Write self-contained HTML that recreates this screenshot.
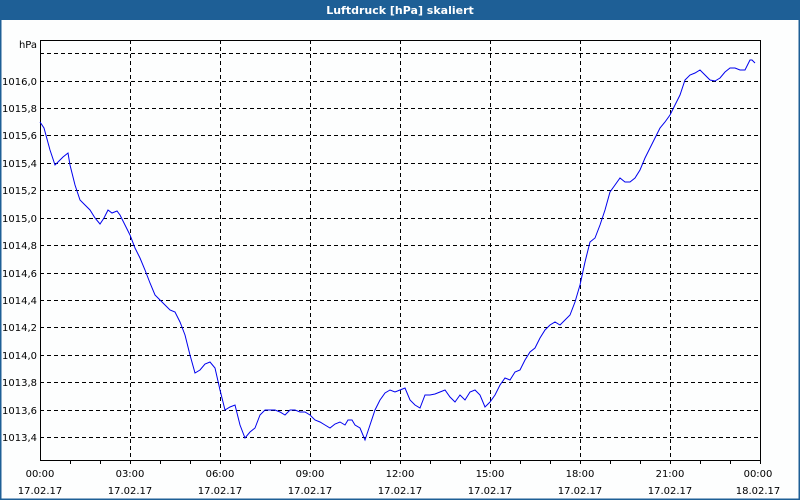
<!DOCTYPE html>
<html><head><meta charset="utf-8"><style>
html,body{margin:0;padding:0;background:#fff}
svg{display:block}
text{font-family:"DejaVu Sans","Liberation Sans",sans-serif;font-size:10px;fill:#000}
</style></head><body>
<svg width="800" height="500" viewBox="0 0 800 500" xmlns="http://www.w3.org/2000/svg">
<rect x="0" y="0" width="800" height="500" fill="#fdfefe"/>
<rect x="0.5" y="0.5" width="799" height="499" fill="none" stroke="#1e5f96" stroke-width="2"/>
<rect x="0" y="0" width="800" height="20" fill="#1e5f96"/>
<text x="400" y="14" text-anchor="middle" style="fill:#fff;font-weight:bold;font-size:11px">Luftdruck [hPa] skaliert</text>
<g stroke="#000" stroke-width="1" stroke-dasharray="4,3" fill="none">
<line x1="40" y1="53.5" x2="760" y2="53.5"/>
<line x1="40" y1="81.5" x2="760" y2="81.5"/>
<line x1="40" y1="108.5" x2="760" y2="108.5"/>
<line x1="40" y1="135.5" x2="760" y2="135.5"/>
<line x1="40" y1="163.5" x2="760" y2="163.5"/>
<line x1="40" y1="190.5" x2="760" y2="190.5"/>
<line x1="40" y1="218.5" x2="760" y2="218.5"/>
<line x1="40" y1="245.5" x2="760" y2="245.5"/>
<line x1="40" y1="273.5" x2="760" y2="273.5"/>
<line x1="40" y1="300.5" x2="760" y2="300.5"/>
<line x1="40" y1="327.5" x2="760" y2="327.5"/>
<line x1="40" y1="355.5" x2="760" y2="355.5"/>
<line x1="40" y1="382.5" x2="760" y2="382.5"/>
<line x1="40" y1="410.5" x2="760" y2="410.5"/>
<line x1="40" y1="437.5" x2="760" y2="437.5"/>
<line x1="130.5" y1="40" x2="130.5" y2="460"/>
<line x1="220.5" y1="40" x2="220.5" y2="460"/>
<line x1="310.5" y1="40" x2="310.5" y2="460"/>
<line x1="400.5" y1="40" x2="400.5" y2="460"/>
<line x1="490.5" y1="40" x2="490.5" y2="460"/>
<line x1="580.5" y1="40" x2="580.5" y2="460"/>
<line x1="670.5" y1="40" x2="670.5" y2="460"/>
</g>
<rect x="40.5" y="40.5" width="720" height="420" fill="none" stroke="#000" stroke-width="1"/>
<g stroke="#000" stroke-width="1">
<line x1="70.5" y1="460" x2="70.5" y2="464"/><line x1="100.5" y1="460" x2="100.5" y2="464"/>
<line x1="130.5" y1="460" x2="130.5" y2="464"/><line x1="160.5" y1="460" x2="160.5" y2="464"/>
<line x1="190.5" y1="460" x2="190.5" y2="464"/><line x1="220.5" y1="460" x2="220.5" y2="464"/>
<line x1="250.5" y1="460" x2="250.5" y2="464"/><line x1="280.5" y1="460" x2="280.5" y2="464"/>
<line x1="310.5" y1="460" x2="310.5" y2="464"/><line x1="340.5" y1="460" x2="340.5" y2="464"/>
<line x1="370.5" y1="460" x2="370.5" y2="464"/><line x1="400.5" y1="460" x2="400.5" y2="464"/>
<line x1="430.5" y1="460" x2="430.5" y2="464"/><line x1="460.5" y1="460" x2="460.5" y2="464"/>
<line x1="490.5" y1="460" x2="490.5" y2="464"/><line x1="520.5" y1="460" x2="520.5" y2="464"/>
<line x1="550.5" y1="460" x2="550.5" y2="464"/><line x1="580.5" y1="460" x2="580.5" y2="464"/>
<line x1="610.5" y1="460" x2="610.5" y2="464"/><line x1="640.5" y1="460" x2="640.5" y2="464"/>
<line x1="670.5" y1="460" x2="670.5" y2="464"/><line x1="700.5" y1="460" x2="700.5" y2="464"/>
<line x1="730.5" y1="460" x2="730.5" y2="464"/><line x1="760.5" y1="460" x2="760.5" y2="464"/>
</g>
<g text-anchor="end">
<text x="37" y="48">hPa</text>
<text x="37" y="85">1016,0</text>
<text x="37" y="112">1015,8</text>
<text x="37" y="139">1015,6</text>
<text x="37" y="167">1015,4</text>
<text x="37" y="194">1015,2</text>
<text x="37" y="222">1015,0</text>
<text x="37" y="249">1014,8</text>
<text x="37" y="277">1014,6</text>
<text x="37" y="304">1014,4</text>
<text x="37" y="331">1014,2</text>
<text x="37" y="359">1014,0</text>
<text x="37" y="386">1013,8</text>
<text x="37" y="414">1013,6</text>
<text x="37" y="441">1013,4</text>
</g>
<g text-anchor="middle">
<text x="40" y="477">00:00</text><text x="40" y="494">17.02.17</text>
<text x="130" y="477">03:00</text><text x="130" y="494">17.02.17</text>
<text x="220" y="477">06:00</text><text x="220" y="494">17.02.17</text>
<text x="310" y="477">09:00</text><text x="310" y="494">17.02.17</text>
<text x="400" y="477">12:00</text><text x="400" y="494">17.02.17</text>
<text x="490" y="477">15:00</text><text x="490" y="494">17.02.17</text>
<text x="580" y="477">18:00</text><text x="580" y="494">17.02.17</text>
<text x="670" y="477">21:00</text><text x="670" y="494">17.02.17</text>
<text x="758" y="477">00:00</text><text x="758" y="494">18.02.17</text>
</g>
<polyline fill="none" stroke="#0000ee" stroke-width="1" points="40,122 44,128 50,150 55,165 58,162 63,157 68,153 70,165 75,185 80,200 85,205 90,210 95,218 100,224 104,218 108,210 112,213 117,211 120,215 125,225 130,235 135,248 140,258 145,270 150,283 155,295 160,300 165,305 170,310 175,312 180,322 185,335 190,355 195,373 200,370 205,364 210,362 215,368 220,390 225,410 230,407 235,405 240,425 245,438 250,432 255,428 260,415 265,410 270,410 275,410 280,412 285,415 290,410 295,410 300,412 305,412 310,415 315,420 320,422 325,425 330,428 335,424 340,422 345,425 348,420 352,420 355,425 360,428 365,440 370,425 375,410 380,400 385,393 390,390 395,392 400,390 405,388 410,400 415,405 420,408 425,395 430,395 435,394 440,392 445,390 450,397 455,402 460,395 465,400 470,392 475,390 480,395 485,407 490,402 495,395 500,385 505,378 510,380 515,372 520,370 525,360 530,352 535,348 540,338 545,330 550,325 555,322 560,325 565,320 570,315 575,302 580,285 585,262 590,242 595,238 600,225 605,210 610,192 615,185 620,178 625,182 630,182 635,178 640,170 645,158 650,148 655,138 660,128 665,122 670,115 675,105 680,95 685,80 690,75 695,73 700,70 705,75 710,80 715,81 720,78 725,72 730,68 735,68 740,70 745,70 750,60 752,60 755,63"/>
</svg>
</body></html>
